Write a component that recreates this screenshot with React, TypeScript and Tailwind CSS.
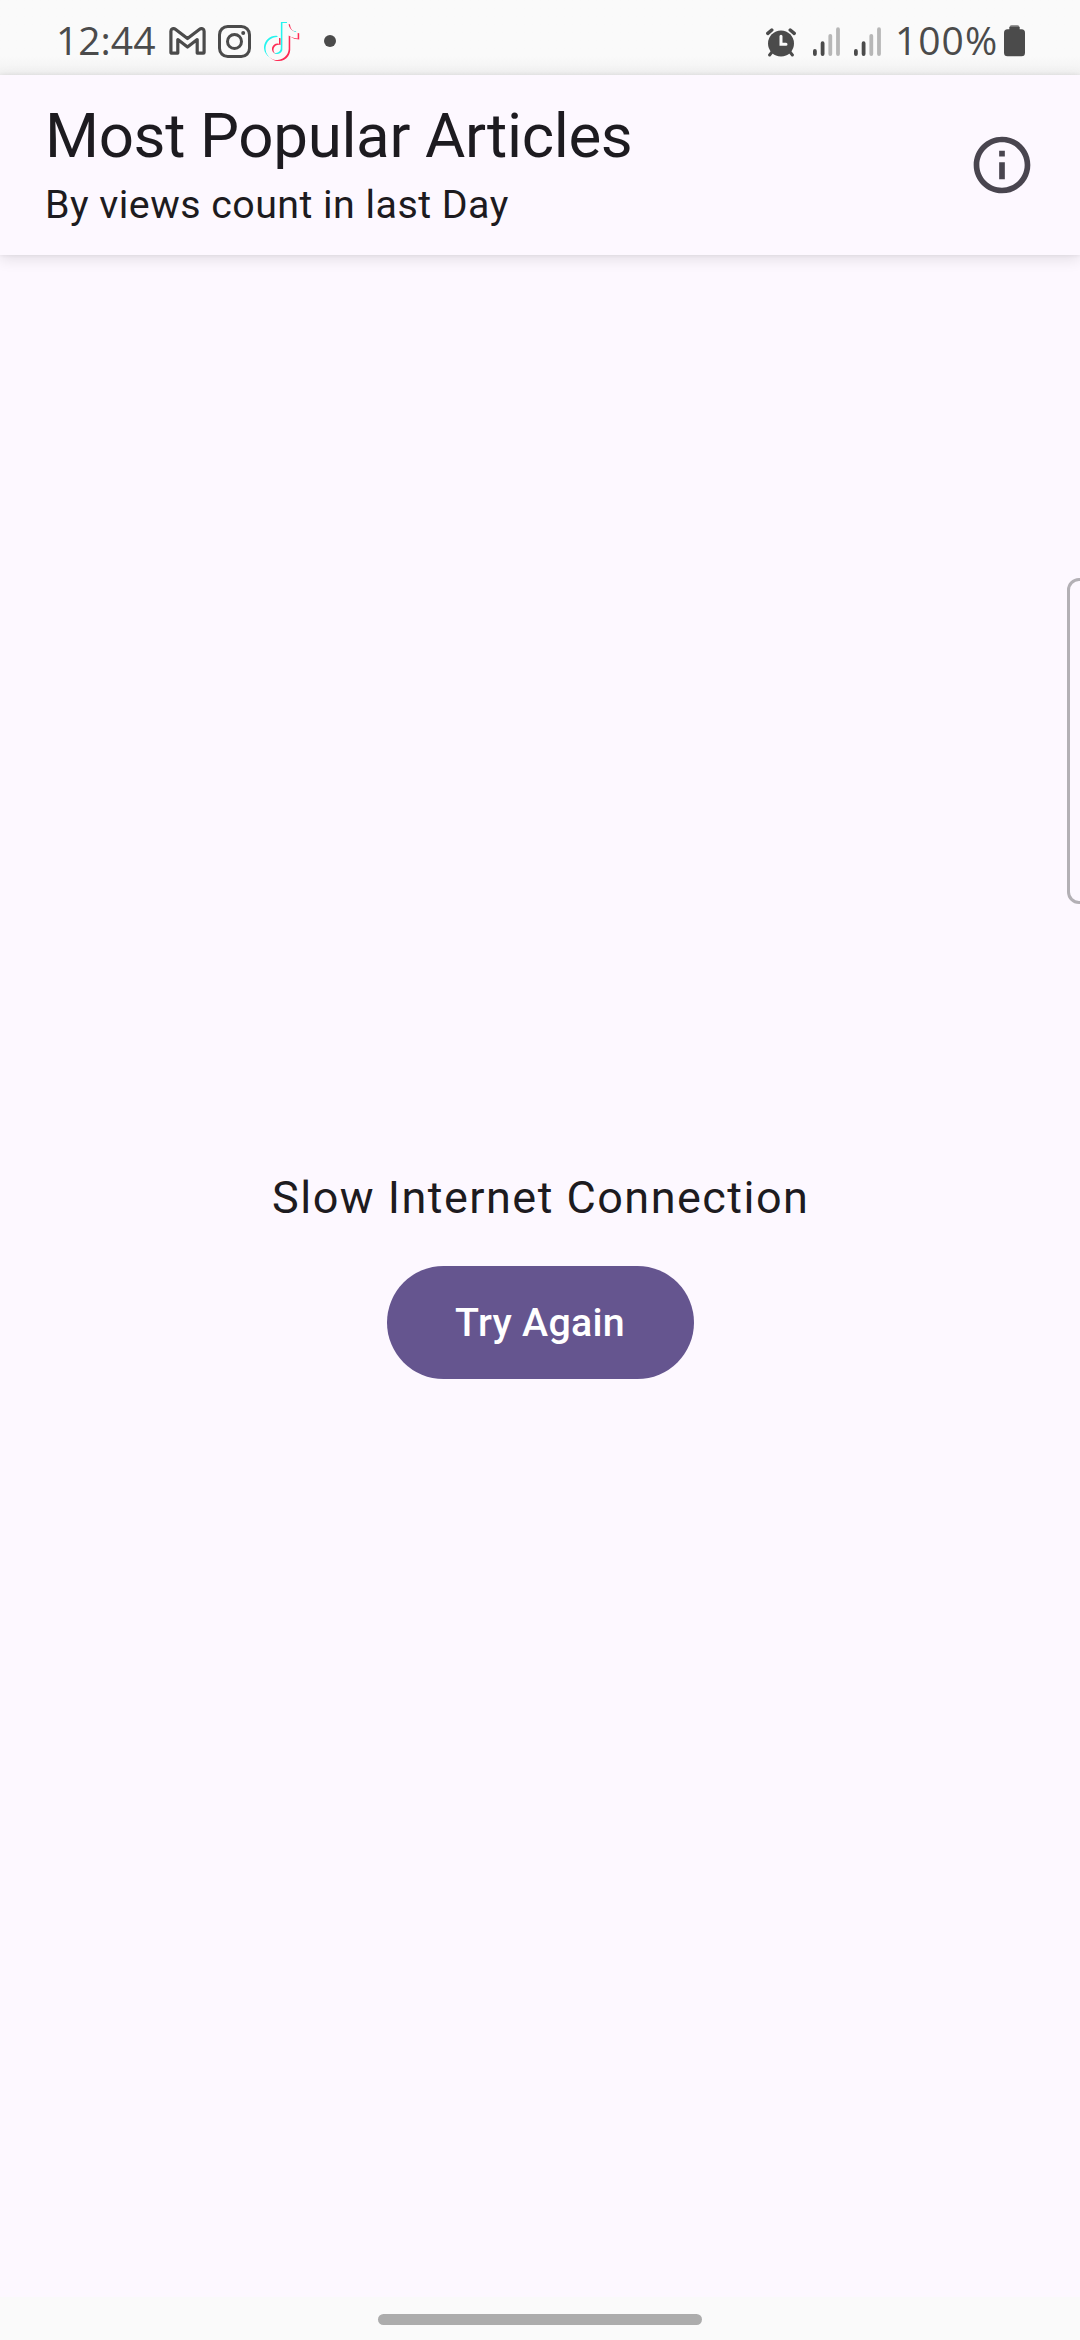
import React from "react";

const INK = "#4b4b4b";

function GmailIcon() {
  return (
    <svg width="37" height="28" viewBox="0 0 37 28" fill="none" stroke={INK} strokeWidth="3.2" strokeLinejoin="round">
      <path d="M1.9 25.4V4.2C1.9 1.8 4.6 0.9 6.4 2.3L18.5 11.6L30.6 2.3C32.4 0.9 35.1 1.8 35.1 4.2V25.4Q35.1 26.1 34.3 26.1H28.2V12.6L18.5 20L8.8 12.6V26.1H2.7Q1.9 26.1 1.9 25.4Z" />
    </svg>
  );
}

function InstagramIcon() {
  return (
    <svg width="33" height="33" viewBox="0 0 33 33" fill="none" stroke={INK}>
      <rect x="1.5" y="1.5" width="30" height="30" rx="8.2" strokeWidth="3" />
      <circle cx="16.5" cy="16.5" r="7" strokeWidth="3" />
      <circle cx="25.2" cy="7.9" r="2" fill={INK} stroke="none" />
    </svg>
  );
}

const NOTE =
  "M12.525.02c1.31-.02 2.61-.01 3.91-.02.08 1.53.63 3.09 1.75 4.17 1.12 1.11 2.7 1.62 4.24 1.79v4.03c-1.44-.05-2.89-.35-4.2-.97-.57-.26-1.1-.59-1.62-.93-.01 2.92.01 5.84-.02 8.75-.08 1.4-.54 2.79-1.35 3.94-1.31 1.92-3.58 3.17-5.91 3.21-1.43.08-2.86-.31-4.08-1.03-2.02-1.19-3.44-3.37-3.65-5.71-.02-.5-.03-1-.01-1.49.18-1.9 1.12-3.72 2.58-4.96 1.66-1.44 3.98-2.13 6.15-1.72.02 1.48-.04 2.96-.04 4.44-.99-.32-2.15-.23-3.02.37-.63.41-1.11 1.04-1.36 1.75-.21.51-.15 1.07-.14 1.61.24 1.64 1.82 3.02 3.5 2.87 1.12-.01 2.19-.66 2.77-1.61.19-.33.4-.67.41-1.06.1-1.79.06-3.57.07-5.36.01-4.03-.01-8.05.02-12.07z";

function TikTokIcon() {
  return (
    <svg width="36" height="40" viewBox="0 0 36 40">
      <g transform="translate(-2.4 0) scale(1.54)">
        <path d={NOTE} fill="#25f4ee" />
        <path d={NOTE} fill="#fe2c55" transform="translate(2 1.4)" />
        <path d={NOTE} fill="#fafafa" transform="translate(1 .7)" />
      </g>
    </svg>
  );
}

function AlarmIcon() {
  return (
    <svg width="30" height="29" viewBox="0 0 30 29" fill={INK} stroke={INK} strokeLinecap="round">
      <circle cx="15" cy="15.5" r="13" stroke="none" />
      <path d="M1.8 5.4L5.8 2M28.2 5.4L24.2 2" strokeWidth="3.4" />
      <path d="M6 24L3.6 27M24 24L26.4 27" strokeWidth="3" />
      <path d="M15 8.3V16.3H20" fill="none" stroke="#fafafa" strokeWidth="3" />
    </svg>
  );
}

function SignalIcon() {
  return (
    <svg width="27" height="30" viewBox="0 0 27 30" strokeWidth="3.8" strokeLinecap="round">
      <path d="M1.9 23.9V27M9.6 16.2V27" stroke={INK} />
      <path d="M17.3 8.8V27M25 2.2V27" stroke="#b7b7b7" />
    </svg>
  );
}

function BatteryIcon() {
  return (
    <svg width="21" height="32" viewBox="0 0 21 32" fill={INK}>
      <rect x="5.5" y="0.3" width="10" height="8" rx="2" fill="#777" />
      <rect x="5.5" y="2" width="10" height="8" />
      <rect x="0" y="4.3" width="21" height="27" rx="3.5" />
    </svg>
  );
}

function StatusBar() {
  return (
    <div className="flex h-[75px] shrink-0 items-start justify-between bg-linear-to-b from-[#fafafa] from-75% to-[#f1f1f1] pl-14 pr-[55px] font-['Open_Sans',sans-serif] text-[39px] leading-[52px] text-[#4b4b4b]">
      <div className="flex pt-[14px]">
        <span className="w-[113px] whitespace-nowrap">12:44</span>
        <div className="pt-[13px]"><GmailIcon /></div>
        <div className="ml-3 pt-[11px]"><InstagramIcon /></div>
        <div className="ml-[13px] pt-2"><TikTokIcon /></div>
        <div className="ml-6 mt-[21px] size-3 rounded-full bg-[#4b4b4b]" />
      </div>
      <div className="flex pt-[14px]">
        <div className="pt-[14px]"><AlarmIcon /></div>
        <div className="ml-[17px] pt-[13px]"><SignalIcon /></div>
        <div className="ml-[14px] pt-[13px]"><SignalIcon /></div>
        <span className="ml-[14px] w-[109px] whitespace-nowrap tracking-[1px]">100%</span>
        <div className="pt-[11px]"><BatteryIcon /></div>
      </div>
    </div>
  );
}

function InfoIcon() {
  return (
    <svg width="68" height="68" viewBox="0 0 24 24" fill="#49454f">
      <path d="M11 7h2v2h-2zm0 4h2v6h-2zm1-9C6.48 2 2 6.48 2 12s4.48 10 10 10 10-4.48 10-10S17.52 2 12 2zm0 18c-4.41 0-8-3.59-8-8s3.59-8 8-8 8 3.59 8 8-3.59 8-8 8z" />
    </svg>
  );
}

export default function App() {
  return (
    <div className="relative flex h-[2340px] w-[1080px] flex-col overflow-hidden bg-[#fdf8ff] font-[Roboto,sans-serif] text-[#1d1b20]">
      <StatusBar />
      <header className="z-10 flex h-[180px] shrink-0 items-center justify-between bg-[#fdf8ff] pl-[45px] pr-11 shadow-[0_4px_14px_rgba(0,0,0,0.11),0_0_4px_rgba(0,0,0,0.07)]">
        <div className="flex flex-col pt-[2px]">
          <h1 className="text-[61.875px] leading-[77px] tracking-[-0.35px]">Most Popular Articles</h1>
          <p className="pt-px text-[39.375px] leading-[58px] tracking-[0.46px]">By views count in last Day</p>
        </div>
        <InfoIcon />
      </header>
      <main className="flex grow flex-col items-center pt-[909px]">
        <p className="pl-[1.5px] text-[45px] leading-[68px] tracking-[1.47px]">Slow Internet Connection</p>
        <button className="mt-[34px] flex h-[113px] w-[307px] items-center justify-center rounded-full bg-[#65558f] text-[39.375px] font-medium tracking-[0.28px] text-white">
          Try Again
        </button>
      </main>
      <footer className="flex h-[43px] shrink-0 justify-center bg-[#fafafa] pt-[17px]">
        <div className="h-[11px] w-[324px] rounded-full bg-[#acacac]" />
      </footer>
      <div className="absolute left-[1067px] top-[578px] h-[326px] w-5 rounded-l-xl border-[3px] border-[#b3b0b5]" />
    </div>
  );
}
